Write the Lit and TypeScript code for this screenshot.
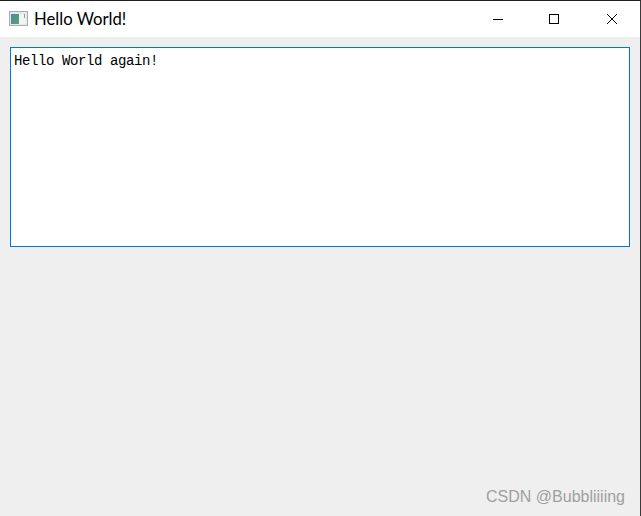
import { LitElement, html, css } from "lit";
import { customElement } from "lit/decorators.js";

@customElement("app-root")
export class AppRoot extends LitElement {
  static styles = css`
    :host { display: block; width: 641px; height: 516px; overflow: hidden; }
    .window { position: relative; box-sizing: border-box; width: 641px; height: 516px; background: #efefef; border-top: 1px solid #1f1f1f; border-right: 1px solid #3a3a3a; display: flex; flex-direction: column; }
    .titlebar { height: 36px; background: #fff; display: flex; align-items: center; flex: none; }
    .app-icon { margin-left: 9px; width: 19px; height: 16px; flex: none; display: block; }
    .title { margin-left: 6px; font: 16.7px/20px "Lato", "Open Sans", sans-serif; color: #000; flex: 1; }
    .controls { display: flex; flex: none; }
    .ctl { width: 58px; height: 34px; display: flex; align-items: center; justify-content: center; padding-left: 2px; box-sizing: border-box; }
    .ctl.min { padding-left: 6px; }
    .ctl svg { display: block; width: 12px; height: 12px; }
    .content { flex: 1; padding: 10px 10px 0 10px; }
    .editor { box-sizing: border-box; width: 620px; height: 200px; background: #fff; border: 1px solid #0078d7; padding: 5px 3px; font: 14px/16px "Liberation Mono", monospace; letter-spacing: -0.4px; color: #000; white-space: pre; }
    .mark { position: absolute; right: 15px; bottom: 9px; font: 16px/20px "Liberation Sans", Arial, sans-serif; color: #a0a0a0; }
  `;
  render() {
    return html`<div class="window">
      <div class="titlebar">
        <svg class="app-icon" viewBox="0 0 19 16">
          <defs><linearGradient id="g" x1="0" y1="0" x2="1" y2="1"><stop offset="0" stop-color="#4a8aa8"/><stop offset="1" stop-color="#5aa070"/></linearGradient></defs>
          <rect x="0.5" y="0.5" width="18" height="14" fill="#e4e8ea" stroke="#a8aeb2"/>
          <rect x="2" y="3" width="8" height="10" fill="url(#g)"/>
          <rect x="10" y="3" width="7" height="10" fill="#f2f4f2"/>
          <rect x="15" y="3" width="1" height="4" fill="#7fa898"/>
        </svg>
        <div class="title">Hello World!</div>
        <div class="controls">
          <div class="ctl min"><svg viewBox="0 0 12 12"><path d="M1 6.5h10" stroke="#000" fill="none"/></svg></div>
          <div class="ctl"><svg viewBox="0 0 12 12"><rect x="1.5" y="1.5" width="9" height="9" stroke="#000" fill="none"/></svg></div>
          <div class="ctl"><svg viewBox="0 0 12 12"><path d="M1 1l10 10M11 1L1 11" stroke="#000" fill="none"/></svg></div>
        </div>
      </div>
      <div class="content"><div class="editor">Hello World again!</div></div>
      <div class="mark">CSDN @Bubbliiiing</div>
    </div>`;
  }
}
